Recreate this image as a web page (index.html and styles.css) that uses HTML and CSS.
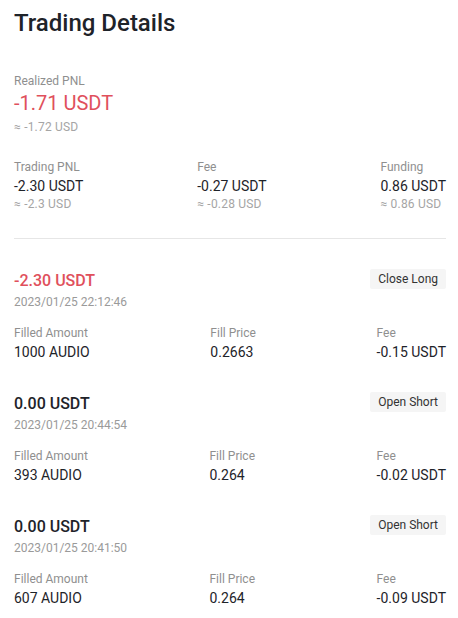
FILE: index.html
```html
<!DOCTYPE html>
<html>
<head>
<meta charset="utf-8">
<link rel="stylesheet" href="styles.css">
</head>
<body>
<div class="page">
  <h1 class="title">Trading Details</h1>

  <section class="realized">
    <div class="label">Realized PNL</div>
    <div class="big red">-1.71 USDT</div>
    <div class="sub">≈ -1.72 USD</div>
  </section>

  <section class="stats">
    <div class="col">
      <div class="label">Trading PNL</div>
      <div class="val">-2.30 USDT</div>
      <div class="sub">≈ -2.3 USD</div>
    </div>
    <div class="col">
      <div class="label">Fee</div>
      <div class="val">-0.27 USDT</div>
      <div class="sub">≈ -0.28 USD</div>
    </div>
    <div class="col">
      <div class="label">Funding</div>
      <div class="val">0.86 USDT</div>
      <div class="sub">≈ 0.86 USD</div>
    </div>
  </section>

  <hr class="divider">

  <section class="trade">
    <div class="trade-head">
      <div>
        <div class="amount red">-2.30 USDT</div>
        <div class="date">2023/01/25 22:12:46</div>
      </div>
      <span class="badge">Close Long</span>
    </div>
    <div class="trade-cols">
      <div class="col"><div class="label">Filled Amount</div><div class="val">1000 AUDIO</div></div>
      <div class="col"><div class="label">Fill Price</div><div class="val">0.2663</div></div>
      <div class="col"><div class="label">Fee</div><div class="val">-0.15 USDT</div></div>
    </div>
  </section>

  <section class="trade">
    <div class="trade-head">
      <div>
        <div class="amount">0.00 USDT</div>
        <div class="date">2023/01/25 20:44:54</div>
      </div>
      <span class="badge">Open Short</span>
    </div>
    <div class="trade-cols">
      <div class="col"><div class="label">Filled Amount</div><div class="val">393 AUDIO</div></div>
      <div class="col"><div class="label">Fill Price</div><div class="val">0.264</div></div>
      <div class="col"><div class="label">Fee</div><div class="val">-0.02 USDT</div></div>
    </div>
  </section>

  <section class="trade">
    <div class="trade-head">
      <div>
        <div class="amount">0.00 USDT</div>
        <div class="date">2023/01/25 20:41:50</div>
      </div>
      <span class="badge">Open Short</span>
    </div>
    <div class="trade-cols">
      <div class="col"><div class="label">Filled Amount</div><div class="val">607 AUDIO</div></div>
      <div class="col"><div class="label">Fill Price</div><div class="val">0.264</div></div>
      <div class="col"><div class="label">Fee</div><div class="val">-0.09 USDT</div></div>
    </div>
  </section>
</div>
</body>
</html>
```

FILE: styles.css
```css
html, body {
  margin: 0;
  padding: 0;
  background: #ffffff;
}
body {
  font-family: "Roboto", "DejaVu Sans", sans-serif;
  color: #1e2329;
}
.page {
  width: 432px;
  padding: 0 12px 0 14px;
}
.title {
  margin: 7px 0 0 0;
  font-size: 24px;
  line-height: 32px;
  font-weight: 500;
  color: #1e2329;
}
.label {
  font-size: 12px;
  line-height: 18px;
  color: #8f8f8f;
}
.sub {
  font-size: 12px;
  line-height: 18px;
  letter-spacing: 0.2px;
  color: #a5a5a5;
}
.val {
  font-size: 14px;
  line-height: 18px;
  color: #1e2329;
}
.red {
  color: #e0505c;
}
.realized {
  margin-top: 33px;
}
.realized .big {
  margin-top: 1px;
  font-size: 20px;
  line-height: 24px;
}
.realized .sub {
  margin-top: 3px;
}
.stats {
  margin-top: 22px;
  display: flex;
  justify-content: space-between;
}
.stats .val {
  margin-top: 1px;
}
.divider {
  margin: 25px 0 0 0;
  border: 0;
  border-top: 1px solid #e6e6e6;
  height: 0;
}
.trade {
  margin-top: 32px;
}
.trade + .trade {
  margin-top: 33px;
}
.trade-head {
  display: flex;
  justify-content: space-between;
  align-items: flex-start;
}
.amount {
  font-size: 16px;
  line-height: 20px;
  font-weight: 500;
}
.date {
  margin-top: 2px;
  font-size: 12px;
  line-height: 18px;
  color: #9a9a9a;
}
.badge {
  margin-top: -2px;
  height: 20px;
  line-height: 20px;
  padding: 0 8px;
  font-size: 12px;
  color: #333;
  background: #f5f5f5;
  border-radius: 2px;
}
.trade-cols {
  margin-top: 13px;
  display: flex;
  justify-content: space-between;
}
.trade-cols .val {
  margin-top: 1px;
}
```
